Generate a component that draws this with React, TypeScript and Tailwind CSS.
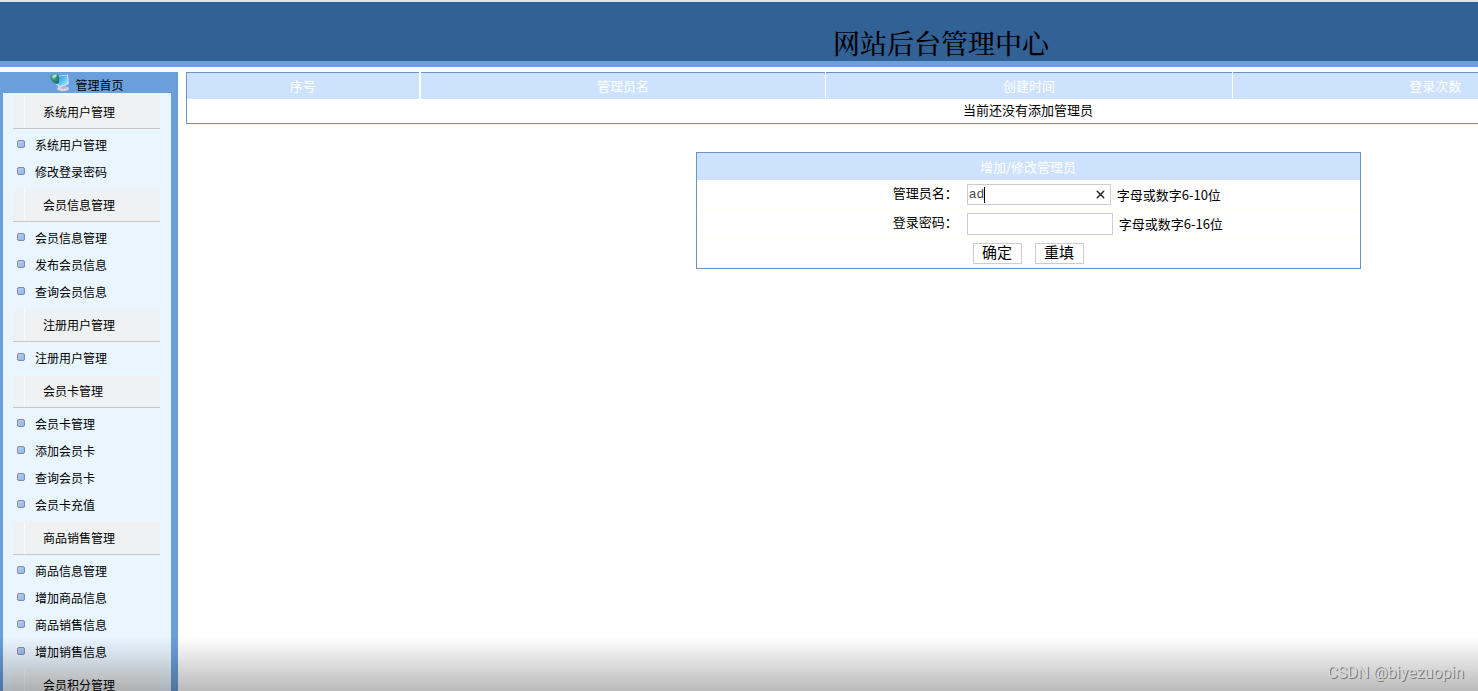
import { X } from "lucide-react";

type Group = { title: string; items: string[] };

const groups: Group[] = [
  { title: "系统用户管理", items: ["系统用户管理", "修改登录密码"] },
  { title: "会员信息管理", items: ["会员信息管理", "发布会员信息", "查询会员信息"] },
  { title: "注册用户管理", items: ["注册用户管理"] },
  { title: "会员卡管理", items: ["会员卡管理", "添加会员卡", "查询会员卡", "会员卡充值"] },
  { title: "商品销售管理", items: ["商品信息管理", "增加商品信息", "商品销售信息", "增加销售信息"] },
  { title: "会员积分管理", items: [] },
];

function HomeIcon() {
  return (
    <svg width="20" height="19" viewBox="0 0 20 19" aria-hidden="true">
      <defs>
        <linearGradient id="screen" x1="0" y1="0" x2="1" y2="1">
          <stop offset="0" stopColor="#2f7fd8" />
          <stop offset="0.5" stopColor="#58c0f0" />
          <stop offset="1" stopColor="#a8f0ff" />
        </linearGradient>
        <radialGradient id="globe" cx="0.4" cy="0.3" r="0.8">
          <stop offset="0" stopColor="#6fc795" />
          <stop offset="0.5" stopColor="#2c8a63" />
          <stop offset="1" stopColor="#1e5fa8" />
        </radialGradient>
      </defs>
      <ellipse cx="13" cy="15.500" rx="6" ry="2.800" fill="#d6d3de" />
      <path d="M10 12l5-1 2 4-5 1z" fill="#b3b4c6" />
      <path d="M4.500 3.500L18 1.500l1 9.500-9 3.500-4-3z" fill="#cfe0f3" />
      <path d="M6 4l11-1.500.5 8-7.500 2.500-3-2.500z" fill="url(#screen)" />
      <path d="M0.500 4.500C0 1.500 4 0 7 1l2 2v6.500L7.500 11C4 10.500 1 8 0.500 4.500z" fill="url(#globe)" />
      <path d="M2 3q3-2.500 5-1.500l-1 2.500-3 1z" fill="#a8dfe0" />
    </svg>
  );
}

function Bullet() {
  return (
    <svg width="8" height="8" viewBox="0 0 8 8" aria-hidden="true" className="mb-[3px] shrink-0">
      <rect x="0.500" y="0.500" width="7" height="7" rx="1.500" fill="#9dbcf0" stroke="#878b9b" />
      <path d="M2 6V2h4" fill="none" stroke="#bdd2f6" />
    </svg>
  );
}

function Sidebar() {
  return (
    <nav className="w-[178px] shrink-0 border-l-3 border-r-7 border-[#6a9fdb] bg-[#e9f5ff] text-xs text-black">
      <a href="#home" className="flex h-[21px] items-center justify-center gap-[5px] bg-[#6a9fdb] pt-1">
        <span className="mb-1">
          <HomeIcon />
        </span>
        管理首页
      </a>
      {groups.map((group) => (
        <section key={group.title} className="pt-[3px]">
          <h2 className="ml-[10px] flex h-[33px] w-[147px] items-center border-b border-[#c4c6ca] bg-[#eff1f3]">
            <span className="h-full w-3 border-r border-[#f8fbfe]" />
            <span className="pl-[18px]">{group.title}</span>
          </h2>
          <ul className="pt-[3px]">
            {group.items.map((item) => (
              <li key={item}>
                <a href="#item" className="flex h-[27px] items-center gap-[10px] pb-px pl-[14px]">
                  <Bullet />
                  {item}
                </a>
              </li>
            ))}
          </ul>
        </section>
      ))}
    </nav>
  );
}

function AdminTable() {
  const head = "h-[26px] border-r border-white bg-[#cde2fd] p-0 text-center font-normal text-white";
  return (
    <table className="w-full table-fixed border-collapse border border-[#6d93b8] text-[13px] leading-5">
      <colgroup>
        <col className="w-[233px]" />
        <col />
        <col />
        <col />
        <col className="w-[231px]" />
      </colgroup>
      <thead>
        <tr>
          <th className="h-[26px] border-r-2 border-white bg-[#cde2fd] p-0 text-center font-normal text-white">序号</th>
          <th className={head}>管理员名</th>
          <th className={head}>创建时间</th>
          <th className={head}>登录次数</th>
          <th className={head}>操作</th>
        </tr>
      </thead>
      <tbody>
        <tr>
          <td colSpan={5} className="h-[25px] p-0 pb-[2px] text-center">
            当前还没有添加管理员
          </td>
        </tr>
      </tbody>
    </table>
  );
}

function AdminForm() {
  const row = "grid grid-cols-[2fr_3fr] items-center border-b border-[#fffff0]";
  const button = "h-[21px] w-[49px] border border-[#cccccc] bg-white pb-[3px] text-[15px] leading-4";
  return (
    <form
      className="mx-auto mt-7 w-[665px] border border-[#6d93c0] text-[13px] leading-5"
      onSubmit={(event) => event.preventDefault()}
    >
      <h2 className="flex h-[27px] items-center justify-center bg-[#cde2fd] text-white">增加/修改管理员</h2>
      <div className={`${row} h-[30px]`}>
        <label htmlFor="name" className="pr-1 pb-1 text-right">
          管理员名：
        </label>
        <div className="flex items-center gap-[6px] pl-[5px]">
          <div className="relative flex">
            <input
              id="name"
              defaultValue="ad"
              className="h-[21px] w-[144px] border border-[#cccccc] bg-white px-px font-['Liberation_Mono',monospace] text-[13px] text-[#444444] outline-none"
            />
            <span className="absolute top-[3px] left-[17px] h-4 w-px bg-black" />
            <button type="button" aria-label="清除" className="absolute top-1 right-1">
              <X size={13} strokeWidth={2.5} color="#222222" />
            </button>
          </div>
          <span>字母或数字6-10位</span>
        </div>
      </div>
      <div className={`${row} h-[29px]`}>
        <label htmlFor="password" className="pr-1 pb-1 text-right">
          登录密码：
        </label>
        <div className="flex items-center gap-[6px] pl-[5px]">
          <input
            id="password"
            type="password"
            className="h-[22px] w-[146px] border border-[#cccccc] bg-white px-px outline-none"
          />
          <span>字母或数字6-16位</span>
        </div>
      </div>
      <div className="flex h-[29px] items-center justify-center gap-[13px]">
        <button type="submit" className={button}>
          确定
        </button>
        <button type="reset" className={button}>
          重填
        </button>
      </div>
    </form>
  );
}

export default function App() {
  return (
    <div className="relative h-screen overflow-hidden bg-white font-['Noto_Sans_CJK_SC',sans-serif] text-black">
      <div className="w-full min-w-[1882px]">
        <header className="flex h-[67px] items-end justify-center border-t-2 border-b-6 border-t-[#dfe5ee] border-b-[#6a9fdb] bg-[#326196]">
          <h1 className="font-['Noto_Serif_CJK_SC','Noto_Sans_CJK_SC',serif] text-[27px] leading-9 font-medium">
            网站后台管理中心
          </h1>
        </header>
        <div className="flex pt-[5px]">
          <Sidebar />
          <main className="min-w-0 flex-1 pr-3 pl-2">
            <AdminTable />
            <AdminForm />
          </main>
        </div>
      </div>
      <footer className="pointer-events-none absolute inset-x-0 bottom-0 flex h-[54px] items-end justify-end bg-linear-to-b from-black/0 to-black/27 pr-[14px] pb-2">
        <span className="font-[Roboto,'Liberation_Sans',sans-serif] text-base leading-5 text-[#d8d8d8] [text-shadow:1px_1px_0_#777777]">
          CSDN @biyezuopin
        </span>
      </footer>
    </div>
  );
}
